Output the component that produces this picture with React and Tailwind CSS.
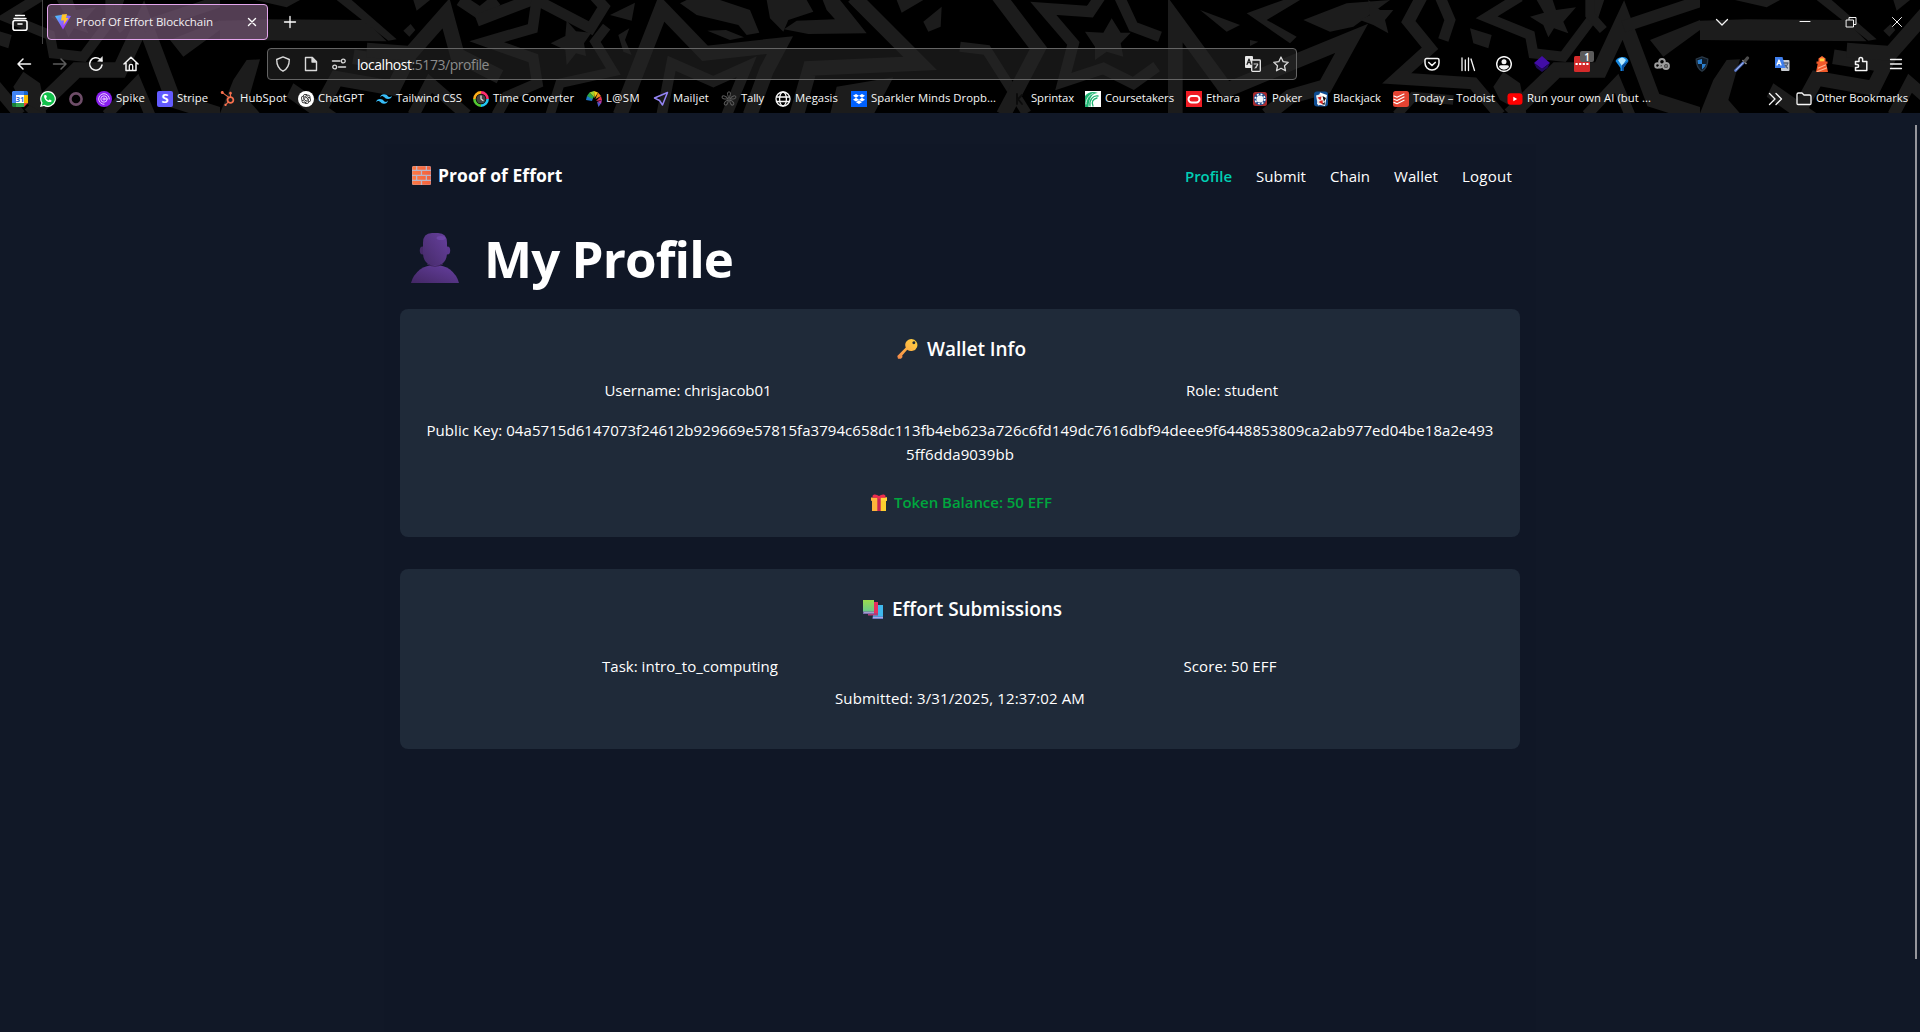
import React, { useLayoutEffect, useRef, useState } from "react";
import { FaPhoneAlt, FaHubspot, FaDropbox } from "react-icons/fa";
import { SiTailwindcss } from "react-icons/si";
import { RiOpenaiFill } from "react-icons/ri";

/* Text that spreads its letter spacing to fill an exact width. */
function Fit({ w, className = "", children }) {
  const ref = useRef(null);
  const [ls, setLs] = useState(0);
  useLayoutEffect(() => {
    const natural = ref.current.getBoundingClientRect().width;
    setLs((w - natural) / children.length);
  }, [w, children]);
  return (
    <span className={"block shrink-0 whitespace-nowrap " + className} style={{ width: w }}>
      <span ref={ref} className="inline-block" style={{ letterSpacing: ls + "px" }}>
        {children}
      </span>
    </span>
  );
}

function Svg({ s = 16, vb = "0 0 16 16", children, className = "" }) {
  return (
    <svg width={s} height={s} viewBox={vb} fill="none" stroke="currentColor" strokeWidth="1.3" strokeLinecap="round" strokeLinejoin="round" className={"shrink-0 " + className}>
      {children}
    </svg>
  );
}

/* ---------- theme pattern, one tile is 1480px wide ---------- */
function PatternTile() {
  return (
    <g fill="none" stroke="#1c1c1c" strokeWidth="44" strokeLinejoin="miter">
      <g fill="#1c1c1c" stroke="none">
        <path d="M660 62 800 58 1095 60 1160 124 660 120Z" />
        <path d="M765 0 900 0 860 22Z" />
        <path d="M1010 0 1055 0 1190 118 1165 122Z" />
        <path d="M1210 92 1232 72 1246 90 1228 110Z" />
        <path d="M1240 0 1290 0 1250 32Z" />
        <path d="M660 340 700 240 740 180 780 178 745 300 780 340Z" />
        <path d="M860 290 880 250 1010 340 930 340Z" />
      </g>
      <path d="M950 345 1010 235 1180 265 1215 195 1060 170" />
      <path d="M1100 150 1232 160 1338 40 1372 165 1500 230" />
      <path d="M1240 345 1290 250 1400 345" strokeWidth="36" />
      <path d="M1380 0 1440 40 1490 0" strokeWidth="36" />
      <path d="M1430 62 1618 -10" strokeWidth="36" />
      <path d="M1780 -15 1812 20 1772 85 1610 0 1598 85 1460 125 1600 175 1612 250 1520 290 1490 345" strokeWidth="32" />
      <path fill="#1c1c1c" stroke="none" d="M1700 62 1728 94 1774 98 1752 130 1758 168 1728 160 1700 195 1696 150 1652 130 1696 108Z" />
      <path fill="#1c1c1c" stroke="none" d="M1830 45 1905 8 1895 62ZM1855 105 1888 85 1875 120 1895 165 1870 155Z" />
      <path d="M1820 80 1785 125 1840 215 1680 250 1650 345" strokeWidth="28" />
      <path d="M1860 345 1985 25 2115 160 2340 135 2300 210 2250 345" strokeWidth="44" />
      <path d="M1985 345 2015 190 2140 245 2240 200 2180 345" strokeWidth="32" />
      <path fill="#1c1c1c" stroke="none" d="M2040 10 2060 0 2160 0 2250 30 2278 98 2240 105 2215 75 2090 45ZM2122 92 2178 90 2232 112 2190 120ZM2300 0 2370 0 2420 0 2440 35 2365 60 2350 95 2310 55Z" />
      <path fill="#1c1c1c" stroke="none" d="M2390 62 2505 58 2480 30 2468 0 2520 0 2600 100 2425 102 2352 88Z" />
      <path d="M2560 -10 2760 190 2430 205 2390 345" strokeWidth="44" />
      <path fill="#1c1c1c" stroke="none" d="M2690 0 2770 0 2705 38ZM2770 65 2825 20 2822 80 2785 95ZM2510 260 2680 232 2620 345 2490 345Z" />
      <path fill="#1c1c1c" stroke="none" d="M3335 55 3362 98 3392 98 3362 130 3370 170 3320 155 3285 180 3285 140 3255 95 3310 98Z" />
      <path d="M2880 140 2960 150 3080 340" strokeWidth="30" />
      <path d="M2990 -20 3115 145 3060 250 3010 345" strokeWidth="44" />
      <path d="M3300 -10 3270 35 3130 25 3220 130 3190 245 3310 205 3400 250 3470 200" strokeWidth="34" />
      <path d="M3358 -10 3400 80 3480 110" strokeWidth="32" />
      <path d="M3526 345 3526 60 3680 270 3860 195 4055 115 3975 260 3870 290 3800 345" strokeWidth="44" />
      <path fill="#1c1c1c" stroke="none" d="M3600 30 3720 75 3680 95ZM3750 120 3775 125 3750 138ZM3740 40 3850 0 3900 0 3800 60 3890 110 3870 130ZM3910 60 4040 10 4170 0 4060 80 3990 95Z" />
      <path fill="#1c1c1c" stroke="none" d="M4080 60 4110 45 4105 0 4140 30 4180 30 4155 60 4165 100 4120 75Z" />
      <path d="M4265 -10 4225 65 4290 145 4190 235 4420 250 4500 345" strokeWidth="36" />
      <path d="M4190 345 4240 290 4360 300" strokeWidth="28" />
      <path fill="#1c1c1c" stroke="none" d="M4610 0 4658 0 4668 30 4728 22 4690 65 4705 100 4662 85 4645 112 4630 75 4590 50 4632 38Z" />
      <path d="M4560 -10 4460 52 4590 105 4600 160 4690 170 4780 50 4800 -10" strokeWidth="30" />
      <path d="M4770 -10 4770 45 4810 90" strokeWidth="28" />
      <path d="M4530 345 4670 210 4800 210 4870 60 4960 300 5100 345" strokeWidth="46" />
      <path d="M4320 -10 4350 60 4330 120" strokeWidth="32" />
      <path d="M4870 80 5110 0" strokeWidth="36" />
      <path d="M4760 345 4850 250 4890 345" strokeWidth="32" />
      <path fill="#1c1c1c" stroke="none" d="M4410 85 4475 105 4465 145 4420 130ZM4480 260 4510 215 4560 250 4580 345 4500 300ZM4950 120 5100 60 5100 90 4990 170Z" />
    </g>
  );
}

function Pattern() {
  return (
    <svg className="absolute inset-0" width="1920" height="113" viewBox="0 0 5760 339">
      <rect width="5760" height="339" fill="#000" />
      <defs>
        <clipPath id="tile"><rect x="660" y="0" width="4440" height="339" /></clipPath>
      </defs>
      {[0, -4440, 4440].map((x) => (
        <g key={x} transform={`translate(${x} 0)`}>
          <g clipPath="url(#tile)"><PatternTile /></g>
        </g>
      ))}
    </svg>
  );
}

/* ---------- small marks ---------- */
const CalendarMark = () => (
  <Svg>
    <g stroke="none">
      <path fill="#4285f4" d="M1 0h12v4H4v9H0V1z" /><path fill="#1967d2" d="M12 0h3l1 1v3h-4z" />
      <path fill="#fbbc04" d="M12 4h4v8h-4z" /><path fill="#34a853" d="M4 12h8v4H4z" />
      <path fill="#188038" d="M0 12h4v4H1l-1-1z" /><path fill="#ea4335" d="M12 12h4l-4 4z" />
      <path fill="#fff" d="M4 4h8v8H4z" />
      <text x="8" y="10.8" textAnchor="middle" fontSize="7.5" fontWeight="700" fontFamily="Open Sans, sans-serif" fill="#2f72e0">31</text>
    </g>
  </Svg>
);
const WhatsMark = () => (
  <span className="relative flex h-4 w-4 shrink-0 items-center justify-center text-white">
    <svg width="16" height="16" viewBox="0 0 16 16">
      <path d="M8 0a8 8 0 1 1-4 15L0 16l1.2-4A8 8 0 0 1 8 0z" fill="#fff" />
      <path d="M8 1.3A6.7 6.7 0 1 1 4.5 13.7l-2.7.7.8-2.6A6.7 6.7 0 0 1 8 1.3z" fill="#12c04b" />
    </svg>
    <FaPhoneAlt size={7.5} className="absolute" />
  </span>
);
const RingMark = () => <Svg><circle cx="8" cy="8" r="5.6" stroke="#6e4d68" strokeWidth="2.6" /></Svg>;
const SpikeMark = () => (
  <Svg><circle cx="8" cy="8" r="8" fill="#8a1ff0" stroke="none" /><g stroke="#e9cfff" strokeWidth="1"><path d="M8 13.3A5.3 5.3 0 1 1 13.3 8" /><circle cx="8" cy="8" r="3.2" /><circle cx="8" cy="8" r="1.1" /></g></Svg>
);
const StripeMark = () => (
  <span className="flex h-4 w-4 shrink-0 items-center justify-center rounded-[2px] bg-[#635bff] text-[13px] leading-none font-bold text-white">S</span>
);
const HubMark = () => <FaHubspot size={15} className="mr-px shrink-0 text-[#f8704d]" />;
const GptMark = () => (
  <span className="flex h-4 w-4 shrink-0 items-center justify-center rounded-full bg-white text-black"><RiOpenaiFill size={12} /></span>
);
const TailMark = () => <SiTailwindcss size={16} className="shrink-0 text-[#38bdf8]" />;
const TimeMark = () => (
  <Svg>
    <circle cx="8" cy="8" r="4.6" fill="#444" stroke="none" />
    <g strokeWidth="2.6" strokeLinecap="butt">
      <path d="M8 1.4A6.6 6.6 0 0 1 14.6 8" stroke="#ff2d6e" /><path d="M14.6 8A6.6 6.6 0 0 1 8 14.6" stroke="#22c7f2" />
      <path d="M8 14.6A6.6 6.6 0 0 1 1.4 8" stroke="#53c832" /><path d="M1.4 8A6.6 6.6 0 0 1 8 1.4" stroke="#ffae1a" />
    </g>
    <path d="M8 5v3l2 1.5" stroke="#ddd" />
  </Svg>
);
const FanMark = () => (
  <Svg>
    <g stroke="none">
      <path d="M0 9 1 5l6 2-1 3z" fill="#1e78c8" /><path d="M1 5 3.5 1.5 8 6 6 8z" fill="#2aa64b" />
      <path d="M3.5 1.5 8 0v6z" fill="#9bd12f" /><path d="M8 0l4 1.5L8.5 7z" fill="#f3d21b" />
      <path d="M12 1.5 15 5 9.5 8z" fill="#f08a1e" /><path d="M15 5l1 4-6 1z" fill="#e4344f" />
      <path d="M16 9l-1 4-4-2z" fill="#b833a0" /><path d="M15 12.5 12.5 16l-1.5-5z" fill="#4b59c9" />
    </g>
  </Svg>
);
const MailMark = () => <Svg><path d="M14.5 1.5 1.5 7l5 2.5L9.5 14z" stroke="#9585f5" strokeWidth="1.5" /></Svg>;
const TallyMark = () => (
  <Svg>
    <g stroke="#5a5a5a" strokeWidth="1">
      {[0, 72, 144, 216, 288].map((a) => <path key={a} transform={`rotate(${a} 8 8)`} d="M8 7C6 4 6 .8 8 .8S10 4 8 7z" />)}
    </g>
  </Svg>
);
const GlobeMark = () => <Svg><circle cx="8" cy="8" r="7" /><ellipse cx="8" cy="8" rx="3.4" ry="7" /><path d="M1.5 6h13M1.5 10.5h13" /></Svg>;
const DropMark = () => <span className="flex h-4 w-4 shrink-0 items-center justify-center bg-[#0061fe] text-white"><FaDropbox size={12} /></span>;
const SprintMark = () => <Svg><path d="M6 3v10M7 8l4-4M7 8l4 5" stroke="#0b0b0b" strokeWidth="1.8" /></Svg>;
const CourseMark = () => (
  <Svg><path fill="#fff" stroke="none" d="M0 0h16v16H0z" /><path fill="#1fb573" stroke="none" d="M0 5C3 1 8 0 13 2 8 2 4 6 3.5 16H0z" /><g stroke="#1fb573"><path d="M5 15C4 9 8 4 13 5M8 15c-2-4 0-7 4-8" /></g><g stroke="#fff" strokeWidth=".8"><path d="M1 13C1 8 4 4 8 2.5" /></g></Svg>
);
const EtharaMark = () => <Svg><path fill="#f01c24" stroke="none" d="M0 0h16v16H0z" /><rect x="2.5" y="5" width="11" height="6.5" rx="3.25" stroke="#fff" strokeWidth="1.9" /></Svg>;
const PokerMark = () => (
  <Svg><rect width="14" height="14" x="1" y="1" rx="2.5" fill="#a92a2c" stroke="none" /><circle cx="8" cy="8" r="5.3" fill="#23508f" stroke="#23508f" strokeWidth="1.8" /><circle cx="8" cy="8" r="4.8" stroke="#fff" strokeWidth="1.6" strokeDasharray="1.9 1.87" strokeLinecap="butt" /><circle cx="8" cy="8" r="3.6" fill="#f3f6fb" stroke="none" /></Svg>
);
const JackMark = () => (
  <Svg><rect width="14" height="15" x="1" y=".5" rx="3" fill="#0e4c92" stroke="none" /><path d="M7 1.5 14 4l-2 11-8-2z" fill="#fff" stroke="none" /><path d="M3 4.5 8 3l2 10-5 1.5z" fill="#eee" stroke="none" /><path d="M4.5 6.5 8.5 5.5l-1 4zM5.5 11l4-2 .5 4.5z" fill="#d22" stroke="none" /><path d="M9.5 5 13 7l-2 4zM9 13l3-2-.5 3z" fill="#111" stroke="none" /></Svg>
);
const TodoMark = () => <Svg><rect width="16" height="16" rx="2.5" fill="#e44332" stroke="none" /><path d="M1 5l3 1.3L11 3M1 8.2l3 1.3 7-3.5M1 11.4l3 1.3 7-3.5" stroke="#fff" strokeWidth="1.2" /></Svg>;
const TubeMark = () => <Svg><rect y="2.2" x=".5" width="15" height="11.6" rx="3" fill="#f00" stroke="none" /><path d="M6.3 5.7v4.6L10.2 8z" fill="#fff" stroke="none" /></Svg>;

/* name, icon, text width, distance to the next entry */
const bookmarks = [
  ["", CalendarMark, 0, 28], ["", WhatsMark, 0, 28], ["", RingMark, 0, 28],
  ["Spike", SpikeMark, 29, 61], ["Stripe", StripeMark, 31, 63], ["HubSpot", HubMark, 47, 78],
  ["ChatGPT", GptMark, 46, 78], ["Tailwind CSS", TailMark, 66, 97], ["Time Converter", TimeMark, 81, 113],
  ["L@SM", FanMark, 34, 67], ["Mailjet", MailMark, 36, 68], ["Tally", TallyMark, 23, 54],
  ["Megasis", GlobeMark, 43, 76], ["Sparkler Minds Dropb...", DropMark, 125, 160],
  ["Sprintax", SprintMark, 43, 74], ["Coursetakers", CourseMark, 69, 101], ["Ethara", EtharaMark, 34, 66],
  ["Poker", PokerMark, 30, 61], ["Blackjack", JackMark, 48, 80], ["Today – Todoist", TodoMark, 82, 114],
  ["Run your own AI (but ...", TubeMark, 124, 150],
];

function TabStrip() {
  return (
    <div className="relative flex h-11 items-center">
      <div className="flex w-[42px] justify-center pt-0.5 pr-0.5">
        <Svg s={18} vb="0 0 18 18"><path d="M4.5 1.5h9M3 4.5h12" /><rect x="2" y="6.5" width="14" height="9.8" rx="2" strokeWidth="1.6" /><path d="M7 10h4" strokeWidth="1.6" /></Svg>
      </div>
      <div className="h-full w-px bg-[#454545]" />
      <div className="ml-1 flex h-9 w-[221px] items-center rounded border border-[#e3a5ec] bg-[#6d516d]/75 pl-[7px]">
        <svg width="16" height="16" viewBox="0 0 16 16" className="shrink-0">
          <defs><linearGradient id="v" x1="0" x2="1" y1="0" y2="1"><stop stopColor="#41d1ff" /><stop offset=".7" stopColor="#a03cff" /></linearGradient></defs>
          <path d="M0 2 7.5 .8 16 2 8 15.5z" fill="url(#v)" />
          <path d="M7 .5 12 0 11 4h2.500L8.500 11 9 6.500H6z" fill="#ffc42a" />
        </svg>
        <Fit w={137} className="ml-[5px] text-[11.5px] text-[#f3f0f3]">Proof Of Effort Blockchain</Fit>
        <Svg s={10} vb="0 0 10 10" className="ml-[34px] text-white"><path d="M1.5 1.5l7 7M8.5 1.5l-7 7" strokeWidth="1.4" /></Svg>
      </div>
      <Svg s={14} vb="0 0 14 14" className="ml-[14.5px] text-white"><path d="M7 1.5v11M1.5 7h11" /></Svg>
      <div className="ml-auto flex items-center text-[#f4f4f4]">
        <Svg s={14} vb="0 0 14 14" className="mr-[70px]"><path d="M1.5 4.5 7 10l5.5-5.5" /></Svg>
        <Svg s={12} vb="0 0 12 12" className="mr-[34px]"><path d="M1 5.5h10" strokeWidth="1" /></Svg>
        <Svg s={12} vb="0 0 12 12" className="mr-[34px]"><path d="M1.5 4h7v7h-7zM4 3.5v-2h7v7H9" strokeWidth="1" strokeLinejoin="miter" /></Svg>
        <Svg s={12} vb="0 0 12 12" className="mr-[17px]"><path d="M1.5 1.5l9 9M10.5 1.5l-9 9" strokeWidth="1" /></Svg>
      </div>
    </div>
  );
}

function NavBar() {
  return (
    <div className="relative flex h-10 items-center text-[#f5f5f5]">
      <Svg className="ml-4"><path d="M14.5 8H2M7 3 2 8l5 5" strokeWidth="1.5" /></Svg>
      <Svg className="ml-5 text-[#5c5c5c]"><path d="M1.5 8H14M9 3l5 5-5 5" strokeWidth="1.5" /></Svg>
      <Svg className="ml-5"><path d="M14 9A6.2 6.2 0 1 1 12 3.3l2 1.7" strokeWidth="1.5" /><path d="M14.3 1v4.3h-4.3z" fill="currentColor" strokeWidth=".6" /></Svg>
      <Svg className="ml-[19px]"><path d="M1 8 8 1.2 15 8M3 6.8v7.7h10V6.8" strokeWidth="1.5" /><path d="M6.3 14.3V10a1.7 1.7 0 0 1 3.4 0v4.3" /></Svg>
      <div className="ml-32 flex h-8 w-[1030px] items-center rounded border border-[#646464] bg-[#252525]/60 pl-[7px] text-[#d9d9d9]">
        <Svg><path d="M8 .9 14.3 3.5C14.3 8.5 12.5 13 8 15.2 3.5 13 1.7 8.5 1.7 3.5z" strokeWidth="1.4" /></Svg>
        <Svg className="ml-3"><path d="M2.5 1.5h6.8L13.5 5.7v8.8h-11z" strokeWidth="1.4" /><path d="M9 1.5V6h4.5z" fill="currentColor" /></Svg>
        <Svg className="ml-3"><path d="M1.5 5H9M7.5 11h7" strokeWidth="1.5" /><circle cx="12.3" cy="5" r="1.9" /><circle cx="3.7" cy="11" r="1.9" /></Svg>
        <div className="ml-[10px] flex pt-px text-[14px]">
          <Fit w={54.5} className="text-white">localhost</Fit>
          <Fit w={77.5} className="text-[#8b8b8b]">:5173/profile</Fit>
        </div>
        <Svg className="mr-3 ml-auto"><rect x="0" y="0" width="8" height="12" rx="1" fill="#e8e8e8" stroke="none" /><rect x="6.7" y="4" width="8.6" height="11.3" rx=".8" fill="#222" stroke="#e8e8e8" /><path d="M2 8.5 4 3l2 5.5M2.6 6.7h2.8" stroke="#222" strokeWidth="1.2" /><path d="M9 8h4l-3 4M11 12l1.5-3" strokeWidth="1" /></Svg>
        <Svg className="mr-[7px]"><path d="M8 1l2.2 4.7 5 .6-3.7 3.5 1 5L8 12.3l-4.5 2.5 1-5L.8 6.3l5-.6z" strokeWidth="1.3" /></Svg>
      </div>
      <div className="ml-auto flex items-center">
        <Svg className="mr-5"><path d="M2.5 2.5h11a1.5 1.5 0 0 1 1.5 1.5v3a7 7 0 0 1-14 0V4a1.5 1.5 0 0 1 1.5-1.5z" strokeWidth="1.5" /><path d="M4.8 6.5 8 9.5l3.2-3" strokeWidth="1.7" /></Svg>
        <Svg className="mr-5"><path d="M2 2v12.5M5.3 4v10.5M8.5 2v12.5M11 3l3.5 11.5" /></Svg>
        <Svg className="mr-[22px]"><circle cx="8" cy="8" r="7.3" strokeWidth="1.5" /><circle cx="8" cy="5.8" r="2.5" fill="currentColor" stroke="none" /><path d="M3 11q0-1.700 1.700-1.700h6.600Q13 9.300 13 11q-2 2.700-5 2.700T3 11z" fill="currentColor" stroke="none" /></Svg>
        <Svg className="mr-6"><path d="M0 7 8 0l8 7-8 6z" fill="#420da6" stroke="none" /><path d="M0 7l8 6 8-6-2.5 5L8 16l-5.5-4z" fill="#210a5c" stroke="none" /></Svg>
        <span className="relative mr-6 h-4 w-4">
          <Svg><rect width="16" height="16" rx="1.5" fill="#d42a2a" stroke="none" /><path d="M1.5 8h13" stroke="#fff" strokeWidth="2.2" strokeDasharray="2.2 1.4" strokeLinecap="butt" /></Svg>
          <span className="absolute -top-[5px] left-1.5 flex h-[11px] w-[14px] items-center justify-center rounded-[2px] bg-[#5b5b5b] text-[10px] leading-none font-semibold text-white">1</span>
        </span>
        <Svg className="mr-6"><path d="M1.5 5Q3 1.5 8 1t6.5 4L9.5 12v3h-3v-3z" fill="#1688e0" stroke="none" /><path d="M4 4Q6 1.5 8 1.5T12 4L8 10z" fill="#b4e8ff" stroke="none" /><path d="M8 9v6h1.5v-3l5-7z" fill="#0c4f9d" stroke="none" /></Svg>
        <Svg className="mr-6"><g stroke="#9c9c9c" strokeWidth="2"><circle cx="8" cy="5.8" r="2.8" /><circle cx="3.5" cy="9.5" r="2.3" /><circle cx="12" cy="10" r="2.9" /><path d="M5 11c2 1 4 0 4-2" /></g><circle cx="12" cy="10" r="1" stroke="#777" /></Svg>
        <Svg className="mr-6"><path d="M8 .8 13.8 3c0 5.5-2 10-5.8 12.2C4.2 13 2.2 8.5 2.2 3z" fill="#0f1b28" stroke="#2a3947" /><path d="M8 3v5H4Q3.5 6 3.5 4.2zM8 8h4Q11 11.5 8 13.5z" fill="#2b7fce" stroke="none" /></Svg>
        <Svg className="mr-6"><path d="M1.5 14.5 9 7" stroke="#5877c9" strokeWidth="2.6" /><path d="M2 14 8.5 7.5" stroke="#b9c8ef" strokeWidth=".8" /><path d="M9 4.5l3 3" stroke="#999" strokeWidth="1.6" /><path d="M11 5l2.5-3" stroke="#4c4c4c" strokeWidth="3.2" /></Svg>
        <Svg className="mr-6"><rect x="7" y="4" width="8.5" height="11" rx="1" fill="#c7cbd1" stroke="none" /><path d="M1 1h7.5L11.5 12H1z" fill="#3f7fee" stroke="none" /><path d="M3 9 5 4l2 5M3.7 7.4h2.6" stroke="#fff" /><path d="M10 7h4l-2 4M11 9l2.5 3" stroke="#51607a" /></Svg>
        <Svg className="mr-[23px]"><path d="M4.5 2.5 8 0l3.5 2.5V6h-7z" fill="#ff6b35" stroke="none" /><path d="M6 2.5h4v3H6z" fill="#ffd23d" stroke="none" /><path d="M2.5 5.5h11v2.3h-1.2L14 16H2L3.7 7.8H2.5z" fill="#f1592a" stroke="none" /><path d="M4.5 12 11.5 9M3.5 15.5l9-3.5" stroke="#ffb08a" /></Svg>
        <Svg className="mr-[19px]"><path d="M2.5 5.5H6V3.3a1.8 1.8 0 0 1 3.6 0v2.2h4.2v9H2.5v-3h1.6a1.5 1.5 0 0 0 0-3H2.5z" strokeWidth="1.5" /></Svg>
        <Svg className="mr-4"><path d="M2.5 3.5h11M2.5 8h11M2.5 12.5h11" strokeWidth="1.3" /></Svg>
      </div>
    </div>
  );
}

function BookmarkBar() {
  return (
    <div className="relative flex h-[29px] items-center pl-3 text-[11.3px] text-[#f7f7f7]">
      {bookmarks.map(([name, Icon, w, step], i) => (
        <div key={i} className="flex shrink-0 items-center gap-1" style={{ width: step }}>
          <Icon />
          {name && <Fit w={w}>{name}</Fit>}
        </div>
      ))}
      <div className="mr-3 ml-auto flex items-center">
        <Svg className="mr-[13px]"><path d="M2.5 2.5 8 8l-5.5 5.5M9 2.5 14.5 8 9 13.5" /></Svg>
        <Svg className="mr-1"><path d="M1 12.5v-9a1.5 1.5 0 0 1 1.5-1.5H6l2 2h5.5A1.5 1.5 0 0 1 15 5.5v7a1 1 0 0 1-1 1H2a1 1 0 0 1-1-1z" /></Svg>
        <Fit w={92}>Other Bookmarks</Fit>
      </div>
    </div>
  );
}

/* ---------- page pictograms ---------- */
const Brick = () => (
  <svg width="19" height="19" viewBox="0 0 19 19" className="shrink-0">
    <defs><linearGradient id="br" x1="0" x2="1"><stop stopColor="#ff7a45" /><stop offset="1" stopColor="#f2603c" /></linearGradient></defs>
    <rect width="19" height="19" rx="1.5" fill="#b9b4c6" />
    <g fill="url(#br)">
      <path d="M.3 1.2Q.5.3 1.5.3H4V3.8H.3zM5.3.3h8.4V3.8H5.3zM15 .3h2.5q1.2 0 1.2 1v2.5H15z" />
      <path d="M.3 5.1H8.8v3.7H.3zM10.1 5.1h8.6v3.7h-8.6zM.3 10.1H4v3.7H.3zM5.3 10.1h8.4v3.7H5.3zM15 10.1h3.7v3.7H15z" />
      <path d="M.3 15.1h8.5v3.6H1.5q-1.2 0-1.2-1zM10.1 15.1h8.6v2.4q0 1.2-1.2 1.2h-7.4z" />
    </g>
  </svg>
);
const Bust = () => (
  <svg width="48" height="50" viewBox="0 0 48 50" className="shrink-0">
    <defs>
      <linearGradient id="bh" x1="0" x2="1" y1="1" y2="0"><stop stopColor="#452a68" /><stop offset="1" stopColor="#66409d" /></linearGradient>
      <linearGradient id="bb" x1="0" x2="1" y1="1" y2="0"><stop stopColor="#432764" /><stop offset=".8" stopColor="#5f3b94" /></linearGradient>
    </defs>
    <ellipse cx="11.5" cy="17.5" rx="2.7" ry="4" fill="#452a68" /><ellipse cx="36.5" cy="17.5" rx="2.7" ry="4" fill="#5c388f" />
    <path d="M12 10Q12 0 21 0h6q9 0 9 10v10q0 7-5 11-3 2-7 2t-7-2q-5-4-5-11z" fill="url(#bh)" />
    <path d="M0 50q2-8 9-13.500Q15 32 24 32t15 4.500Q46 42 48 50z" fill="url(#bb)" />
    <path d="M16 31q8 4.500 16 0" stroke="#3d245c" fill="none" />
    <ellipse cx="30" cy="5" rx="4.5" ry="2" fill="#734aae" opacity=".7" />
  </svg>
);
const KeyMark = () => (
  <svg width="21" height="20" viewBox="0 0 21 20" className="shrink-0">
    <defs><linearGradient id="ky" x1="1" x2="0" y1="0" y2="1"><stop stopColor="#ffd43f" /><stop offset=".6" stopColor="#fdaa45" /><stop offset="1" stopColor="#f0854a" /></linearGradient></defs>
    <path d="M14.5 0a6.3 6 0 1 1-4.3 10.7l-5 5.8.3 1.5-1.5 1.8H1L.3 17l8.5-8.500A6.300 6 0 0 1 14.500 0zm2.300 2.200a1.500 1.500 0 1 0 .1 3 1.500 1.500 0 0 0-.1-3z" fill="url(#ky)" fillRule="evenodd" />
  </svg>
);
const Gift = () => (
  <svg width="16" height="17" viewBox="0 0 16 17" className="shrink-0">
    <path d="M1 6h14v11H1z" fill="#fdb53a" /><path d="M9.5 6H15v11H9.5z" fill="#fdcf2e" /><path d="M0 3.5h16v3.3H0z" fill="#ffb83d" />
    <path d="M9 3.5h7v3.3H9z" fill="#ffd83a" /><path d="M6.3 3h3.4v14H6.3z" fill="#c72455" />
    <path d="M1.5 3.7Q1 1 3 .5 5.5 0 8 2q2.5-2 5-1.5 2 .5 1.5 3.2H9.5L8 5.5 6.5 3.7z" fill="#ee2c4e" />
  </svg>
);
const Books = () => (
  <svg width="20" height="19" viewBox="0 0 20 19" className="shrink-0">
    <defs><linearGradient id="gb" x2="0" y2="1"><stop stopColor="#9bdb4d" /><stop offset="1" stopColor="#67c98c" /></linearGradient></defs>
    <path d="M10 5h10v12.5H10z" fill="#3fb8ee" /><path d="M9.5 16.5H20V19H9.5z" fill="#6573c4" /><path d="M10 17.3h10v.8H10z" fill="#c4c2ee" />
    <path d="M5 2h10v12H5z" fill="#e6305f" /><path d="M5 13h10v2.5H5z" fill="#b03c77" />
    <path d="M0 0h11v12H0z" fill="url(#gb)" /><path d="M0 11.5h11V14H0z" fill="#7568a8" /><path d="M1 12.3h10v.8H1z" fill="#b9b6dc" />
  </svg>
);

export default function App() {
  return (
    <div className="flex h-[1032px] w-[1920px] flex-col overflow-hidden bg-[#111827] font-['Open_Sans','Noto_Sans',sans-serif] text-white">
      <header className="relative h-[113px] shrink-0 overflow-hidden bg-black">
        <Pattern />
        <TabStrip />
        <NavBar />
        <BookmarkBar />
      </header>

      <div className="flex flex-1">
        <div className="w-96 shrink-0" />
        <main className="mt-[31px] flex w-[1152px] shrink-0 flex-col bg-[#101726] px-4 text-[15px]">
          <nav className="flex h-[62px] items-center justify-between pr-2 pl-3">
            <div className="flex items-center gap-[7px]">
              <Brick />
              <Fit w={124.5} className="text-[17.5px] font-bold">Proof of Effort</Fit>
            </div>
            <div className="flex items-center gap-6 pt-0.5">
              <Fit w={47} className="font-semibold text-[#00cfb4]">Profile</Fit>
              <Fit w={50}>Submit</Fit>
              <Fit w={40}>Chain</Fit>
              <Fit w={44}>Wallet</Fit>
              <Fit w={50}>Logout</Fit>
            </div>
          </nav>

          <h1 className="flex h-[103px] items-center gap-[25px] pl-[11px]">
            <Bust />
            <Fit w={249} className="pt-[2px] text-[51px] leading-none font-bold">My Profile</Fit>
          </h1>

          <section className="h-[228px] shrink-0 rounded-lg bg-[#1f2a39] px-6 pt-6 leading-6">
            <h2 className="mb-[13px] flex h-8 items-center justify-center gap-[9px] pl-[3px] text-[19px] font-semibold">
              <KeyMark />
              <Fit w={99}>Wallet Info</Fit>
            </h2>
            <div className="grid grid-cols-2 justify-items-center gap-4">
              <Fit w={167}>Username: chrisjacob01</Fit>
              <Fit w={92}>Role: student</Fit>
            </div>
            <div className="mt-4 flex flex-col items-center">
              <Fit w={1067}>Public Key: 04a5715d6147073f24612b929669e57815fa3794c658dc113fb4eb623a726c6fd149dc7616dbf94deee9f6448853809ca2ab977ed04be18a2e493</Fit>
              <Fit w={108}>5ff6dda9039bb</Fit>
            </div>
            <div className="mt-6 flex items-center justify-center gap-[7px] pl-[3px] font-semibold text-[#00a63e]">
              <Gift />
              <Fit w={158}>Token Balance: 50 EFF</Fit>
            </div>
          </section>

          <section className="mt-8 h-[180px] shrink-0 rounded-lg bg-[#1f2a39] px-6 pt-6 leading-6">
            <h2 className="flex h-8 items-center justify-center gap-[9px] pl-[5px] text-[19px] font-semibold">
              <Books />
              <Fit w={170}>Effort Submissions</Fit>
            </h2>
            <div className="mt-[29px] grid grid-cols-2 justify-items-center gap-8 px-3">
              <Fit w={176}>Task: intro_to_computing</Fit>
              <Fit w={93}>Score: 50 EFF</Fit>
            </div>
            <div className="mt-2 flex justify-center">
              <Fit w={250}>Submitted: 3/31/2025, 12:37:02 AM</Fit>
            </div>
          </section>
        </main>
        <div className="flex w-96 shrink-0 justify-end pt-3 pr-[3px]">
          <div className="h-[834px] w-[2px] bg-[#96969c]" />
        </div>
      </div>
    </div>
  );
}
